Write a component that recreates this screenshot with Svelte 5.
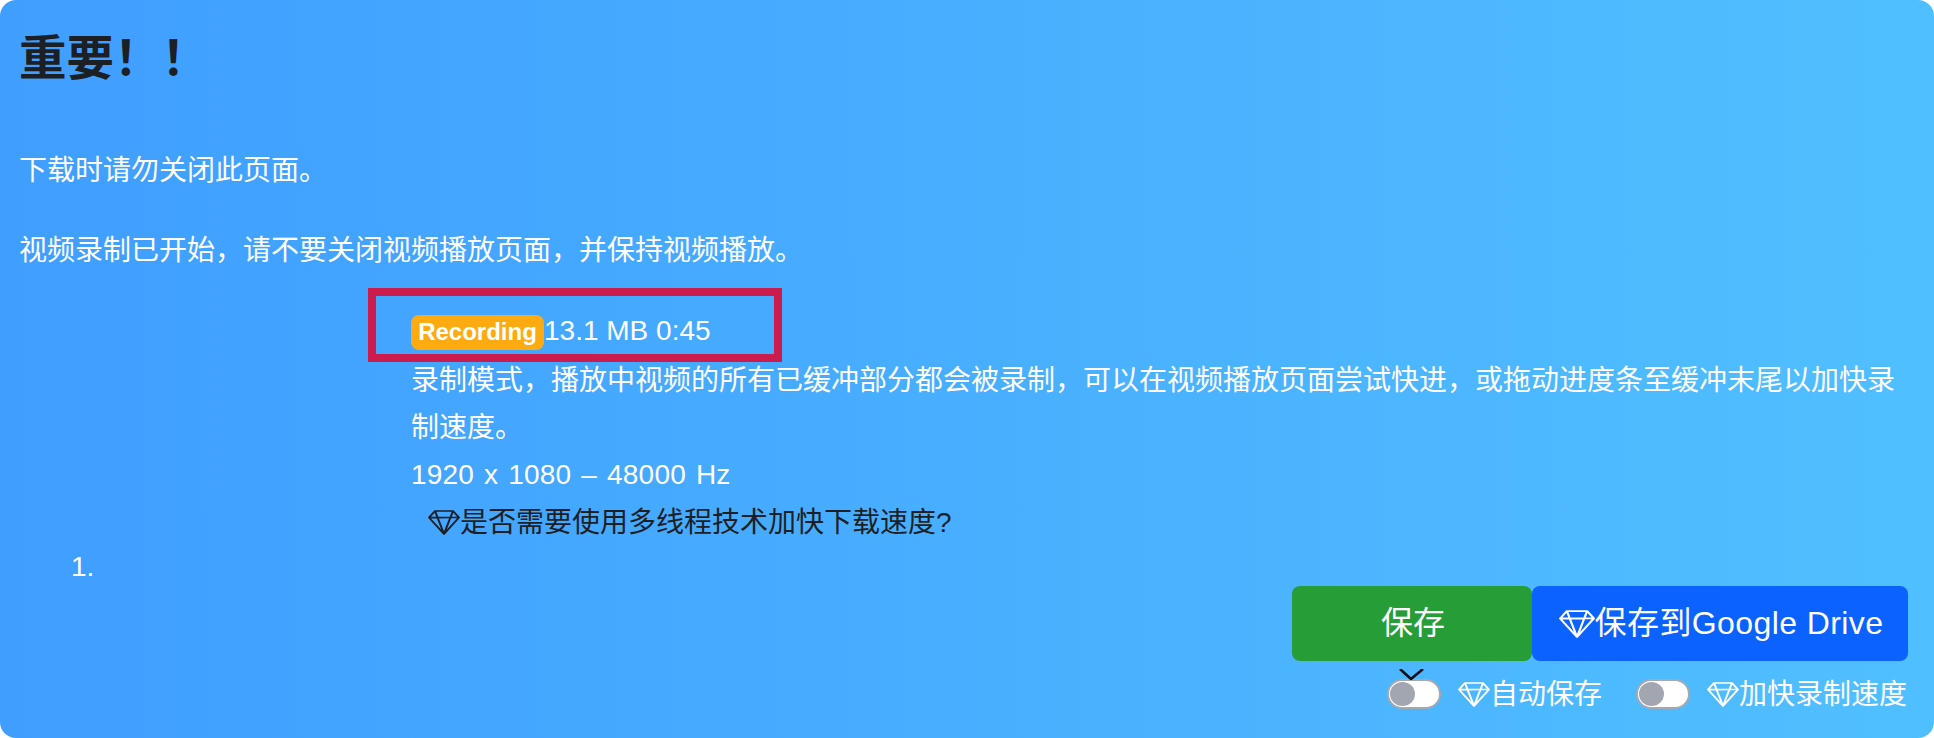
<script lang="ts">
  // download notice card, one recording task in the list
  const gem = "M3.1.7a.5.5 0 0 1 .4-.2h9a.5.5 0 0 1 .4.2l2.976 3.974c.149.185.156.45.01.644L8.4 15.3a.5.5 0 0 1-.8 0L.1 5.3a.5.5 0 0 1 0-.6l3-4zm11.386 3.785-1.806-2.41-.776 2.413 2.582-.003zm-3.633.004.961-2.989H4.186l.963 2.995 5.704-.006zM5.47 5.495 8 13.366l2.532-7.876-5.062.005zm-1.371-.999-.78-2.422-1.818 2.425 2.598-.003zM1.499 5.5l5.113 6.817-2.192-6.82L1.5 5.5zm7.889 6.817 5.123-6.83-2.928.002-2.195 6.828z";
  const toggles = [
    { label: '自动保存', cursor: true },
    { label: '加快录制速度', cursor: false },
  ];
</script>

{#snippet gemIcon(cls)}
  <svg class="gem {cls}" viewBox="0 0.4 16 15.2" preserveAspectRatio="none" fill="currentColor"><path d={gem} /></svg>
{/snippet}

<div class="card">
  <h1>重要！！</h1>
  <p>下载时请勿关闭此页面。</p>
  <p>视频录制已开始，请不要关闭视频播放页面，并保持视频播放。</p>

  <div class="details">
    <div class="status">
      <span class="badge">Recording</span><span class="size">13.1 MB 0:45</span>
      <div class="highlight"></div>
    </div>
    <div class="desc">录制模式，播放中视频的所有已缓冲部分都会被录制，可以在视频播放页面尝试快进，或拖动进度条至缓冲末尾以加快录制速度。</div>
    <div class="desc res">1920 x 1080 – 48000 Hz</div>
    <div class="ask">{@render gemIcon('gem-ask')}是否需要使用多线程技术加快下载速度?</div>
  </div>

  <div class="index">1.</div>

  <div class="actions">
    <button class="btn save">保存</button>
    <button class="btn drive">{@render gemIcon('gem-btn')}保存到Google Drive</button>
  </div>

  <div class="options">
    {#each toggles as t}
      <div class="option">
        <span class="switch">
          <i></i>
          {#if t.cursor}
            <svg class="cursor" viewBox="0 0 25 11" fill="none" stroke="#111" stroke-width="2.6"><path d="M1 0l11 10L24 0" /></svg>
          {/if}
        </span>
        <span class="opt-label">{@render gemIcon('gem-opt')}{t.label}</span>
      </div>
    {/each}
  </div>
</div>

<style>
  :global(body) { background: #fff; }
  .card {
    box-sizing: border-box;
    width: 1934px;
    height: 738px;
    padding: 34px 26px 0 19px;
    border-radius: 16px;
    background: linear-gradient(90deg, #409eff, #50bfff);
    color: #fff;
    font-family: "Liberation Sans", "Noto Sans CJK SC", sans-serif;
    font-size: 28px;
    line-height: 47px;
  }
  h1 { margin: 0 0 64px; font-size: 47.5px; line-height: 49px; font-weight: 700; color: #1c1f23; }
  p { margin: 33px 0 0; }
  .details { margin: 33px 0 0 392px; }
  .status { position: relative; display: flex; align-items: center; height: 50px; }
  .badge {
    box-sizing: border-box;
    width: 133px;
    height: 35px;
    border-radius: 8px;
    background: #fdab10;
    font-size: 24px;
    font-weight: 700;
    line-height: 33px;
    text-align: center;
  }
  .size { padding-bottom: 3px; }
  .highlight {
    position: absolute;
    left: -43px;
    top: -19px;
    width: 414px;
    height: 74px;
    box-sizing: border-box;
    border: 8px solid #cb1c4d;
  }
  .res { word-spacing: 2px; letter-spacing: .2px; }
  .ask { height: 49px; padding-left: 17px; display: flex; align-items: center; color: #1c1f23; }
  .gem { flex: none; }
  .gem-ask { width: 32px; height: 25px; }
  .index { margin-left: 52px; line-height: 40px; }
  .actions { display: flex; justify-content: flex-end; margin-top: -1px; }
  .btn {
    display: flex;
    align-items: center;
    justify-content: center;
    height: 75px;
    padding: 0 0 0 2px;
    border: 0;
    border-radius: 8px;
    color: #fff;
    font: inherit;
    font-size: 32px;
  }
  .save { width: 240px; background: #279d38; }
  .drive { width: 376px; background: #0b62fe; letter-spacing: .4px; }
  .gem-btn { width: 36px; height: 28px; }
  .options { display: flex; justify-content: flex-end; gap: 34px; margin: 18px 1px 0 0; }
  .option { display: flex; align-items: center; gap: 17px; height: 30px; }
  .switch {
    position: relative;
    box-sizing: border-box;
    width: 54px;
    height: 30px;
    padding: 1px;
    border: 2px solid #a5a9b0;
    border-radius: 15px;
    background: #fff;
  }
  .switch i { display: block; width: 25px; height: 24px; border-radius: 50%; background: #a1a6b0; }
  .cursor { position: absolute; left: 10px; top: -12px; width: 25px; height: 11px; }
  .opt-label { display: flex; align-items: center; }
  .gem-opt { width: 32px; height: 25px; }
</style>
